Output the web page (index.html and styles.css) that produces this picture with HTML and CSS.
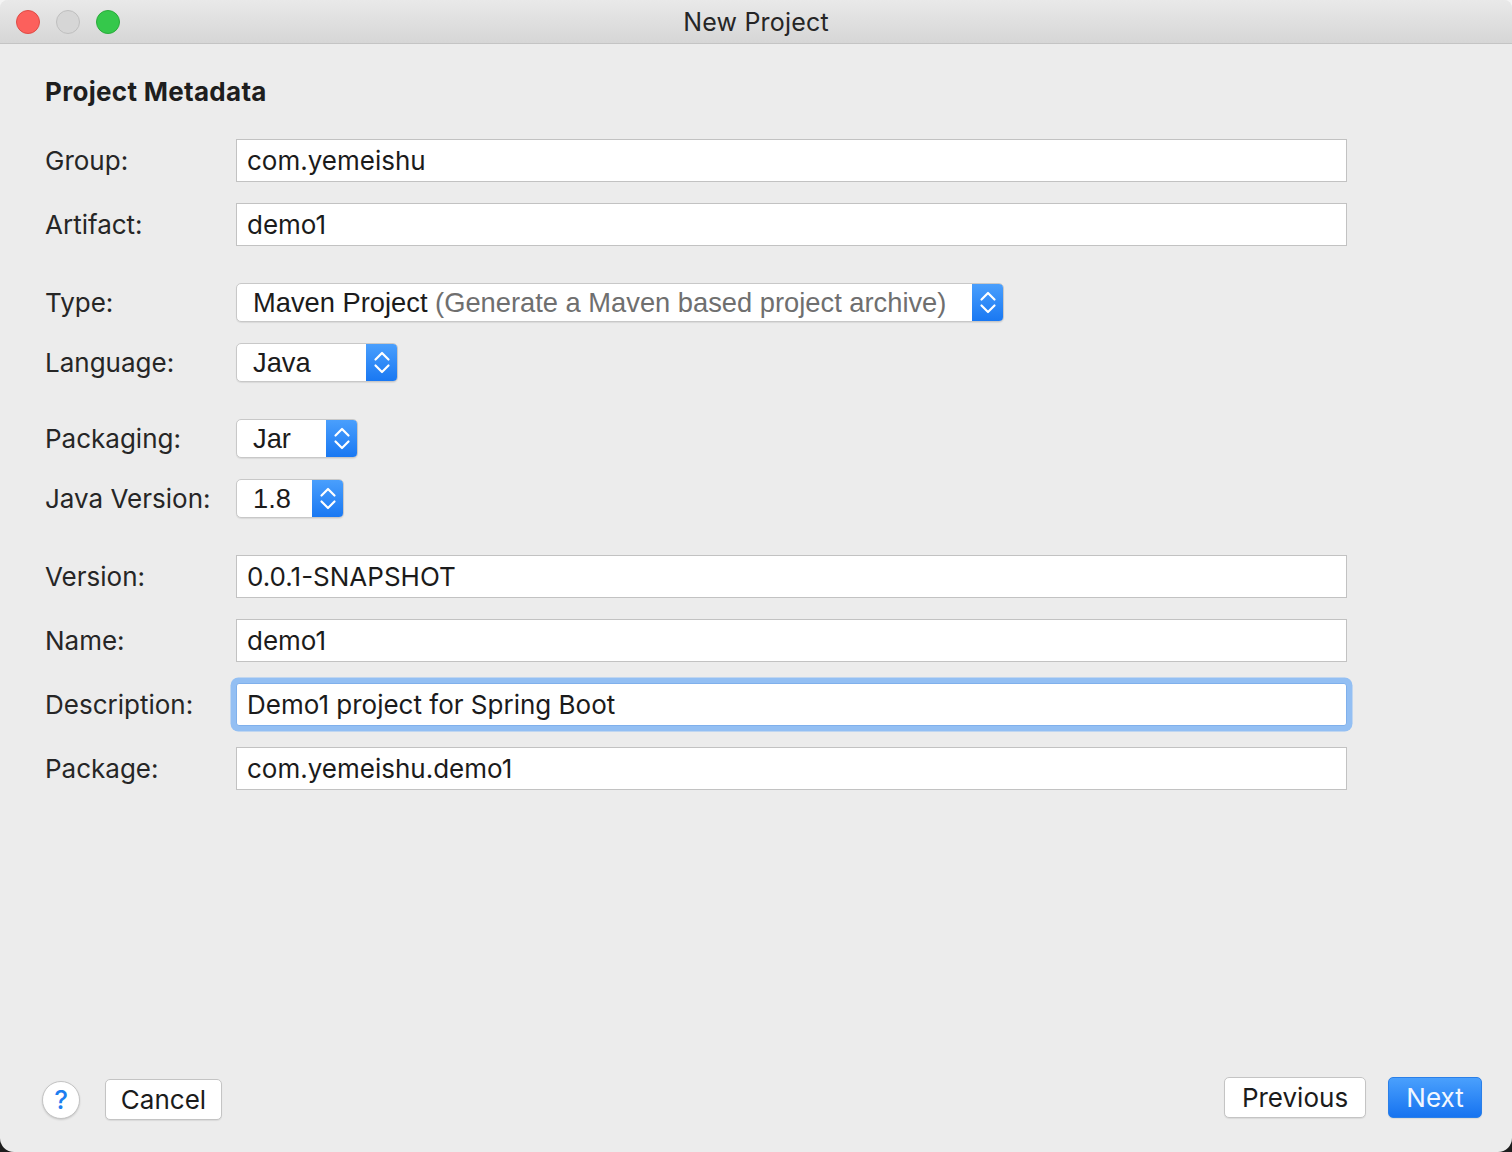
FILE: index.html
```html
<!DOCTYPE html>
<html>
<head>
<meta charset="utf-8">
<link rel="stylesheet" href="styles.css">
</head>
<body>
<div class="window">
  <div class="titlebar">
    <div class="lights">
      <span class="light red"></span>
      <span class="light gray"></span>
      <span class="light green"></span>
    </div>
    <div class="title">New Project</div>
  </div>
  <div class="content">
    <h1 class="heading">Project Metadata</h1>

    <div class="row first">
      <label class="label">Group:</label>
      <div class="field">com.yemeishu</div>
    </div>
    <div class="row">
      <label class="label">Artifact:</label>
      <div class="field">demo1</div>
    </div>

    <div class="row group">
      <label class="label">Type:</label>
      <div class="select sel-type"><span class="sel-text">Maven Project <span class="muted">(Generate a Maven based project archive)</span></span><span class="stepper"><svg viewBox="0 0 32 39" width="32" height="39"><path d="M9.5 16.5 L16 10 L22.5 16.5 M9.5 22.5 L16 29 L22.5 22.5" fill="none" stroke="#fff" stroke-width="2.2" stroke-linecap="round" stroke-linejoin="round"/></svg></span></div>
    </div>
    <div class="row">
      <label class="label">Language:</label>
      <div class="select sel-lang"><span class="sel-text">Java</span><span class="stepper"><svg viewBox="0 0 32 39" width="32" height="39"><path d="M9.5 16.5 L16 10 L22.5 16.5 M9.5 22.5 L16 29 L22.5 22.5" fill="none" stroke="#fff" stroke-width="2.2" stroke-linecap="round" stroke-linejoin="round"/></svg></span></div>
    </div>

    <div class="row group">
      <label class="label">Packaging:</label>
      <div class="select sel-pack"><span class="sel-text">Jar</span><span class="stepper"><svg viewBox="0 0 32 39" width="32" height="39"><path d="M9.5 16.5 L16 10 L22.5 16.5 M9.5 22.5 L16 29 L22.5 22.5" fill="none" stroke="#fff" stroke-width="2.2" stroke-linecap="round" stroke-linejoin="round"/></svg></span></div>
    </div>
    <div class="row">
      <label class="label">Java Version:</label>
      <div class="select sel-java"><span class="sel-text">1.8</span><span class="stepper"><svg viewBox="0 0 32 39" width="32" height="39"><path d="M9.5 16.5 L16 10 L22.5 16.5 M9.5 22.5 L16 29 L22.5 22.5" fill="none" stroke="#fff" stroke-width="2.2" stroke-linecap="round" stroke-linejoin="round"/></svg></span></div>
    </div>

    <div class="row group">
      <label class="label">Version:</label>
      <div class="field">0.0.1-SNAPSHOT</div>
    </div>
    <div class="row">
      <label class="label">Name:</label>
      <div class="field">demo1</div>
    </div>
    <div class="row">
      <label class="label">Description:</label>
      <div class="field focused">Demo1 project for Spring Boot</div>
    </div>
    <div class="row">
      <label class="label">Package:</label>
      <div class="field">com.yemeishu.demo1</div>
    </div>
  </div>

  <div class="footer">
    <div class="footer-left">
      <button class="help">?</button>
      <button class="btn cancel">Cancel</button>
    </div>
    <div class="footer-right">
      <button class="btn previous">Previous</button>
      <button class="btn primary">Next</button>
    </div>
  </div>
</div>
</body>
</html>
```

FILE: styles.css
```css
html, body {
  margin: 0;
  padding: 0;
}
body {
  width: 1512px;
  height: 1152px;
  background: linear-gradient(#f4f4f4 50%, #1e1e1e 50%);
  font-family: Inter, "Liberation Sans", sans-serif;
  color: #1d1d1d;
  overflow: hidden;
}
.window {
  width: 1512px;
  height: 1152px;
  background: #ececec;
  border-radius: 8px 8px 14px 14px;
  display: flex;
  flex-direction: column;
  overflow: hidden;
}
.titlebar {
  height: 43px;
  flex: none;
  background: linear-gradient(#e9e9e9, #d6d6d6);
  border-bottom: 1px solid #c4c4c4;
  position: relative;
  display: flex;
  align-items: center;
  justify-content: center;
}
.lights {
  position: absolute;
  left: 16px;
  top: 10px;
  display: flex;
  gap: 16px;
}
.light {
  width: 24px;
  height: 24px;
  border-radius: 50%;
  box-sizing: border-box;
  border: 1px solid;
}
.red { background: #fc605c; border-color: #df4b45; }
.gray { background: #d6d6d6; border-color: #bfbfbf; }
.green { background: #35c84b; border-color: #2aab3b; }
.title {
  font-size: 25px;
  color: #262626;
  letter-spacing: 0.2px;
  margin-top: 1px;
}
.content {
  padding: 32px 165px 0 45px;
  flex: 1;
}
.heading {
  margin: 0;
  font-size: 26px;
  line-height: 32px;
  font-weight: 700;
  color: #1e1e1e;
  letter-spacing: 0.3px;
}
.row {
  display: flex;
  align-items: center;
  margin-top: 21px;
}
.row.first { margin-top: 31px; }
.row.group { margin-top: 37px; }
.label {
  width: 191px;
  flex: none;
  font-size: 26px;
  line-height: 32px;
  color: #262626;
}
.field {
  flex: 1;
  height: 43px;
  box-sizing: border-box;
  background: #fff;
  border: 1px solid #c2c2c2;
  padding: 0 10px;
  display: flex;
  align-items: center;
  font-size: 26px;
  color: #1b1b1b;
}
.field.focused {
  border-color: #7fb0ec;
  border-radius: 3px;
  box-shadow: 0 0 0 5.5px #93bff3;
}
.select {
  height: 39px;
  box-sizing: border-box;
  display: flex;
  align-items: stretch;
  background: #fff;
  border: 1px solid #c8c8c8;
  border-radius: 5px;
  box-shadow: 0 1px 1px rgba(0,0,0,0.08);
  overflow: hidden;
}
.sel-text {
  flex: 1;
  display: flex;
  align-items: center;
  padding-left: 16px;
  font-family: "Liberation Sans", sans-serif;
  font-size: 27.3px;
  color: #1b1b1b;
  white-space: pre;
}
.muted { color: #6f6f6f; }
.stepper {
  width: 32px;
  flex: none;
  margin: -1px -1px -1px 0;
  background: linear-gradient(#4ba0fd, #1877f2);
  display: flex;
  align-items: center;
  justify-content: center;
}
.stepper svg { display: block; }
.sel-type { width: 768px; }
.sel-lang { width: 162px; }
.sel-pack { width: 122px; }
.sel-java { width: 108px; }

.footer {
  flex: none;
  height: 72px;
  box-sizing: border-box;
  padding: 0 30px 35px 42px;
  display: flex;
  align-items: center;
  justify-content: space-between;
}
.footer-left, .footer-right {
  display: flex;
  align-items: center;
}
.footer-left { gap: 25px; margin-top: 2px; }
.footer-right { gap: 22px; margin-top: -2px; }
button {
  font-family: Inter, "Liberation Sans", sans-serif;
}
.help {
  width: 38px;
  height: 38px;
  border-radius: 50%;
  background: #fff;
  border: 1px solid #c4c4c4;
  box-shadow: 0 1px 2px rgba(0,0,0,0.15);
  color: #1d7ef0;
  font-size: 26px;
  font-weight: 500;
  padding: 0;
  display: flex;
  align-items: center;
  justify-content: center;
}
.btn {
  height: 41px;
  box-sizing: border-box;
  background: #fff;
  border: 1px solid #c4c4c4;
  border-radius: 5px;
  box-shadow: 0 1px 1px rgba(0,0,0,0.08);
  font-size: 26px;
  color: #1b1b1b;
  padding: 0;
}
.cancel { width: 117px; }
.previous { width: 142px; }
.primary {
  width: 94px;
  background: linear-gradient(#4aa0fd, #1673f0);
  border-color: #2a7fe8;
  color: #f2f7ff;
}
```
